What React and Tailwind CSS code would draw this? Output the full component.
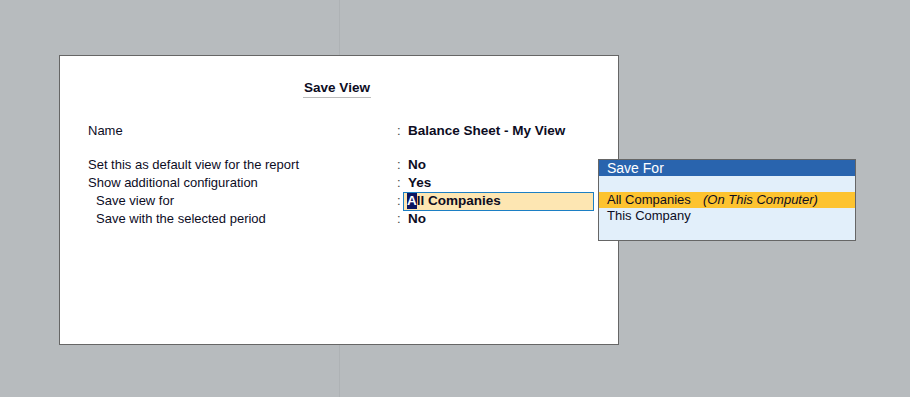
import React from 'react';

const rows = [
  { label: 'Set this as default view for the report', value: 'No' },
  { label: 'Show additional configuration', value: 'Yes' },
  { label: 'Save view for', value: 'All Companies', indent: true, active: true },
  { label: 'Save with the selected period', value: 'No', indent: true },
];

function Row({ label, value, indent, active }) {
  return (
    <div className="flex items-center h-[18px]">
      <div className={`w-[309px] ${indent ? 'pl-2' : ''}`}>{label}</div>
      <div className="w-[6px] text-[#444]">:</div>
      {active ? (
        <div className="w-[191px] h-[19px] border border-[#1c7fc4] bg-[#fde6b2] flex items-center pl-[3px] font-bold text-[13.5px]">
          <span className="bg-[#0b1560] text-white leading-[16px]">A</span>
          <span>ll Companies</span>
        </div>
      ) : (
        <div className="pl-[5px] font-bold text-[13.5px]">{value}</div>
      )}
    </div>
  );
}

export default function App() {
  return (
    <div
      className="relative w-[910px] h-[397px] overflow-hidden bg-[#b7bbbe] flex text-[13px] text-[#0d0d1f]"
      style={{ fontFamily: '"Liberation Sans", Arial, sans-serif' }}
    >
      <div className="w-[340px] h-full border-r border-[#aeb2b5]" />
      <div className="flex-1 h-full" />

      {/* dialog */}
      <div className="absolute left-[59px] top-[55px] w-[560px] h-[290px] bg-white border border-[#666]">
        <div className="flex justify-center pt-[24px] pr-[4px]">
          <div className="font-bold text-[13.5px] border-b border-[#bbb] leading-[16px] pb-[1px] px-[1px]">Save View</div>
        </div>
        <div className="pl-[28px] pt-[24px]">
          <div className="flex items-center h-[18px]">
            <div className="w-[309px]">Name</div>
            <div className="w-[6px] text-[#444]">:</div>
            <div className="pl-[5px] font-bold text-[13.5px]">Balance Sheet - My View</div>
          </div>
          <div className="h-[16px]" />
          {rows.map((r) => (
            <Row key={r.label} {...r} />
          ))}
        </div>
      </div>

      {/* list popup */}
      <div className="absolute left-[598px] top-[159px] w-[258px] h-[82px] bg-[#e2effa] border border-[#666] flex flex-col text-[13px]">
        <div className="bg-[#2964ae] text-white text-[14px] h-[16px] leading-[16px] pl-[8px]">Save For</div>
        <div className="h-[16px]" />
        <div className="bg-[#fdc32f] h-[16px] leading-[16px] pl-[8px] flex">
          <span className="w-[96px]">All Companies</span>
          <span className="italic">(On This Computer)</span>
        </div>
        <div className="h-[16px] leading-[16px] pl-[8px]">This Company</div>
      </div>
    </div>
  );
}
